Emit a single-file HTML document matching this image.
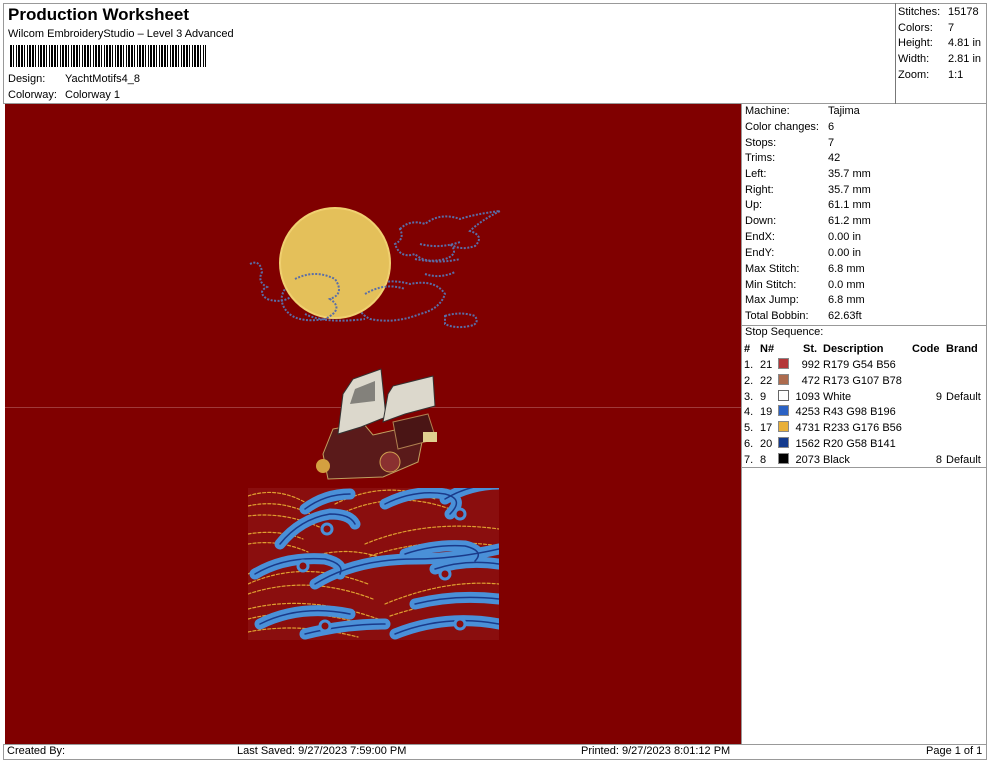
<!DOCTYPE html>
<html><head><meta charset="utf-8"><style>
body{margin:0;width:990px;height:762px;background:#fff;font-family:"Liberation Sans",Arial,sans-serif;font-size:11px;color:#000;position:relative;overflow:hidden}
.a{position:absolute;white-space:nowrap}
.r{position:absolute;left:745px;white-space:nowrap}
.r span{position:absolute;left:83px}
.sq{display:inline-block;width:9px;height:9px;vertical-align:-1px}
</style></head><body>
<div class="a" style="left:3px;top:3px;width:984px;height:101px;border:1px solid #999;box-sizing:border-box"></div>
<div class="a" style="left:895px;top:3px;width:92px;height:101px;border-left:1px solid #777"></div>
<div class="a" style="left:8px;top:5px;font-size:17px;font-weight:bold">Production Worksheet</div>
<div class="a" style="left:8px;top:28px">Wilcom EmbroideryStudio – Level 3 Advanced</div>
<div class="a" style="left:10px;top:45px;width:196px;height:22px;background:repeating-linear-gradient(90deg,#000 0 2px,#fff 2px 3px,#000 3px 4px,#fff 4px 6px,#000 6px 7px,#fff 7px 8px,#000 8px 10px,#fff 10px 11px)"></div>
<div class="a" style="left:8px;top:73px">Design:</div><div class="a" style="left:65px;top:73px">YachtMotifs4_8</div>
<div class="a" style="left:8px;top:89px">Colorway:</div><div class="a" style="left:65px;top:89px">Colorway 1</div>
<div class="a" style="left:898px;top:5px;line-height:15.7px">Stitches:<br>Colors:<br>Height:<br>Width:<br>Zoom:</div>
<div class="a" style="left:948px;top:5px;line-height:15.7px">15178<br>7<br>4.81 in<br>2.81 in<br>1:1</div>

<div class="a" style="left:5px;top:104px;width:736px;height:640px;background:#800000"></div>
<div class="a" style="left:5px;top:407px;width:736px;height:1px;background:#a03a3a"></div>
<svg class="a" style="left:5px;top:104px" width="736" height="640">
<defs><clipPath id="c"><rect x="243" y="384" width="251" height="152"/></clipPath></defs>
<g fill="none" stroke="#5a6ea8" stroke-width="2" stroke-dasharray="2 1.5">
<path d="M395 125 q10-10 25-5 q15-12 35-5 q15-5 40-8 q-20 10-30 20 q15 5 5 15 q-15 5-25-2 q10 10-5 15 q-20 5-30-5 q-15 5-20-10 q10-5 5-15z"/>
<path d="M415 140 q20 5 40-2 M410 155 q25 5 45 0 M420 170 q15 5 30-2"/>
<path d="M245 160 q10-5 12 8 q-5 10 5 15 q-10 5 0 12 q15 5 25-3"/>
<path d="M290 175 q20-10 40 0 q10 15 -5 20 q15 10 -5 20 q-30 5-40-10 q-10-15 10-30z"/>
<path d="M360 185 q20-12 45-5 q25-5 35 10 q-5 15-25 20 q-25 10-50 5 q-20-10-5-30z"/>
<path d="M300 210 q20 10 60 5 M440 212 q15-5 30 0 q5 8-5 10 q-15 3-25-2z"/>
</g>
<circle cx="330" cy="159" r="55" fill="#e4c05a" stroke="#f0d070" stroke-width="2"/>
<g fill="none" stroke="#5a6ea8" stroke-width="2" stroke-dasharray="2 1.5">
<path d="M290 175 q20-10 40 0 q10 15 -5 20 q15 10 -5 20"/><path d="M360 190 q20-12 40-5"/>
</g>
<!-- ship -->
<g>
<path d="M318 350 l10-25 l30-6 l10 12 l35-8 l15 10 l-5 25 l-35 15 l-55 2z" fill="#5a1a1a" stroke="#c0a060"/>
<path d="M333 330 l5-40 l10-15 l28 -10 l5 48 l-25 10z" fill="#dcd8cc" stroke="#333"/>
<path d="M378 318 l5-28 l5-8 l40-10 l2 30 l-30 8z" fill="#dcd8cc" stroke="#333"/>
<path d="M388 318 l35-8 l8 25 l-38 10z" fill="#4a1515" stroke="#b08050"/>
<path d="M345 300 l5-15 l20-8 l0 20z" fill="#2a2a2a" opacity=".5"/>
<circle cx="318" cy="362" r="7" fill="#d4a040"/>
<circle cx="385" cy="358" r="10" fill="#8a3030" stroke="#d0a050"/>
<rect x="418" y="328" width="14" height="10" fill="#e0d090"/>
</g>
<!-- waves -->
<g clip-path="url(#c)">
<rect x="243" y="384" width="251" height="152" fill="#8a0e0e"/>
<g fill="none" stroke-linecap="round">
<g stroke="#e0a030" stroke-width="1.2" stroke-dasharray="3 2">
<path d="M243 392 q30-10 60 8 M243 402 q35-8 70 12 M243 412 q40-5 80 15 M243 470 q50-25 110 -5 M243 480 q55-25 120 0 M243 490 q60-20 125 5 M243 505 q60-15 130 10 M243 515 q60-15 130 10 M243 528 q50-10 110 5 M330 400 q50-25 100-5 M335 410 q55-25 110-5 M360 440 q60-25 134-15 M365 452 q60-20 129-10 M380 500 q60-25 114-20 M385 512 q60-20 109-15 M390 525 q60-15 104-10 M300 455 q40-15 80 0 M243 430 q30-5 55 5 M243 440 q30-5 60 8"/>
</g>
<g stroke="#4a90d8" stroke-width="11">
<path d="M275 440 q20-25 50-30 q20 0 25 10 M300 405 q20-15 45-15 M380 400 q30-15 60-10 q20 5 5 20 M440 395 q25-15 55-15 M250 470 q30-18 70-15 q20 5 15 15 M310 480 q40-25 100-25 q40 0 84-10 M400 450 q30-10 60-8 q20 5 10 15 M430 465 q30-10 64-5 M255 520 q40-20 90-10 M300 530 q40-10 80-10 M390 530 q50-20 104-10 M410 500 q40-10 84-5"/>
</g>
<g stroke="#1a3a8a" stroke-width="1.5">
<path d="M275 440 q20-25 50-30 q20 0 25 10 M300 405 q20-15 45-15 M380 400 q30-15 60-10 q20 5 5 20 M440 395 q25-15 55-15 M250 470 q30-18 70-15 q20 5 15 15 M310 480 q40-25 100-25 q40 0 84-10 M400 450 q30-10 60-8 q20 5 10 15 M430 465 q30-10 64-5 M255 520 q40-20 90-10 M300 530 q40-10 80-10 M390 530 q50-20 104-10 M410 500 q40-10 84-5"/>
</g>
<g fill="#8a0e0e" stroke="#4a90d8" stroke-width="3">
<circle cx="322" cy="425" r="5"/><circle cx="455" cy="410" r="5"/><circle cx="298" cy="462" r="5"/><circle cx="440" cy="470" r="5"/><circle cx="320" cy="522" r="5"/><circle cx="455" cy="520" r="5"/>
</g></g></g>
</svg>

<div class="a" style="left:741px;top:104px;width:246px;height:640px;border-left:1px solid #999;border-right:1px solid #999;box-sizing:border-box"></div>
<div class="r" style="top:105px">Machine:<span>Tajima</span></div>
<div class="r" style="top:121px">Color changes:<span>6</span></div>
<div class="r" style="top:137px">Stops:<span>7</span></div>
<div class="r" style="top:152px">Trims:<span>42</span></div>
<div class="r" style="top:168px">Left:<span>35.7 mm</span></div>
<div class="r" style="top:184px">Right:<span>35.7 mm</span></div>
<div class="r" style="top:199px">Up:<span>61.1 mm</span></div>
<div class="r" style="top:215px">Down:<span>61.2 mm</span></div>
<div class="r" style="top:231px">EndX:<span>0.00 in</span></div>
<div class="r" style="top:247px">EndY:<span>0.00 in</span></div>
<div class="r" style="top:263px">Max Stitch:<span>6.8 mm</span></div>
<div class="r" style="top:279px">Min Stitch:<span>0.0 mm</span></div>
<div class="r" style="top:294px">Max Jump:<span>6.8 mm</span></div>
<div class="r" style="top:310px">Total Bobbin:<span>62.63ft</span></div>
<div class="a" style="left:742px;top:325px;width:245px;height:1px;background:#999"></div>
<div class="r" style="top:326px">Stop Sequence:</div>
<div class="a" style="left:742px;top:467px;width:245px;height:1px;background:#999"></div>
<div class="a" style="left:744px;top:342px;line-height:15.8px;font-size:11px">
<div style="font-weight:bold;text-decoration:underline;position:relative;height:16px"><span class="a" style="left:0">#</span><span class="a" style="left:16px">N#</span><span class="a" style="left:59px">St.</span><span class="a" style="left:79px">Description</span><span class="a" style="left:168px">Code</span><span class="a" style="left:202px">Brand</span></div>
</div>
<div class="a" style="left:744px;top:358px;line-height:15.8px">1.<br>2.<br>3.<br>4.<br>5.<br>6.<br>7.</div>
<div class="a" style="left:760px;top:358px;line-height:15.8px">21<br>22<br>9<br>19<br>17<br>20<br>8</div>
<div class="a" style="left:778px;top:358px;line-height:15.8px">
<span class="sq" style="background:#b33638;border:1px solid #888"></span><br><span class="sq" style="background:#ad6b4e;border:1px solid #888"></span><br><span class="sq" style="background:#fff;border:1px solid #666"></span><br><span class="sq" style="background:#2b62c4;border:1px solid #888"></span><br><span class="sq" style="background:#e9b038;border:1px solid #888"></span><br><span class="sq" style="background:#143a8d;border:1px solid #888"></span><br><span class="sq" style="background:#000;border:1px solid #888"></span></div>
<div class="a" style="left:790px;top:358px;width:30px;text-align:right;line-height:15.8px">992<br>472<br>1093<br>4253<br>4731<br>1562<br>2073</div>
<div class="a" style="left:823px;top:358px;line-height:15.8px">R179 G54 B56<br>R173 G107 B78<br>White<br>R43 G98 B196<br>R233 G176 B56<br>R20 G58 B141<br>Black</div>
<div class="a" style="left:930px;top:358px;line-height:15.8px;width:12px;text-align:right"><br><br>9<br><br><br><br>8</div>
<div class="a" style="left:946px;top:358px;line-height:15.8px"><br><br>Default<br><br><br><br>Default</div>

<div class="a" style="left:3px;top:744px;width:984px;height:16px;border:1px solid #999;box-sizing:border-box"></div>
<div class="a" style="left:7px;top:745px">Created By:</div>
<div class="a" style="left:237px;top:745px">Last Saved: 9/27/2023 7:59:00 PM</div>
<div class="a" style="left:581px;top:745px">Printed: 9/27/2023 8:01:12 PM</div>
<div class="a" style="left:926px;top:745px">Page 1 of 1</div>
</body></html>
